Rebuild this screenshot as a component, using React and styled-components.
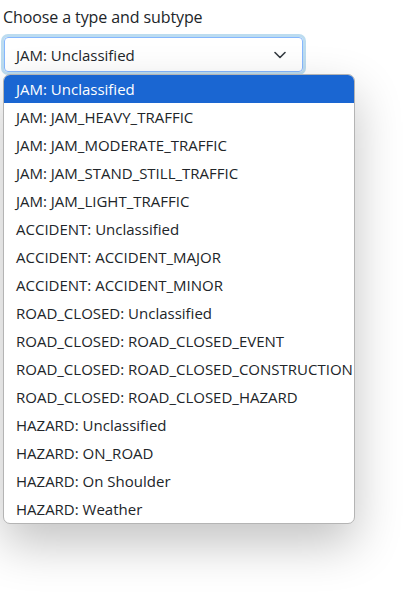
import React from "react";
import styled, { createGlobalStyle } from "styled-components";

const GlobalStyle = createGlobalStyle`
  body {
    margin: 0;
    background: #ffffff;
    font-family: "Open Sans", "Noto Sans", sans-serif;
    color: #212529;
  }
`

const Page = styled.div`
  padding: 3px 0 0 3px;
  width: 418px;
  height: 615px;
  box-sizing: border-box;
`
const Label = styled.div`
  font-size: 16px;
  line-height: 28px;
  margin-bottom: 6px;
  letter-spacing: -0.1px;
`
const Field = styled.div`
  position: relative;
  width: 352px;
`
const SelectBox = styled.div`
  box-sizing: border-box;
  width: 299px;
  height: 35px;
  margin-left: 1px;
  border: 1px solid #86b7fe;
  border-radius: 4px;
  box-shadow: 0 0 0 3px #bcdcf0;
  display: flex;
  align-items: center;
  justify-content: space-between;
  padding: 0 16px 0 11px;
  font-size: 15px;
`
const Chevron = styled.svg`
  width: 12px;
  height: 8px;
  color: #343a40;
`
const Listbox = styled.ul`
  list-style: none;
  margin: 2px 0 0 0;
  padding: 0;
  width: 352px;
  box-sizing: border-box;
  background: #fff;
  border: 1px solid #b4b4b4;
  border-radius: 7px;
  overflow: hidden;
  box-shadow: 0 20px 48px rgba(0, 0, 0, 0.24);
`
const Option = styled.li`
  height: 28px;
  line-height: 28px;
  padding-left: 12px;
  font-size: 15px;
  white-space: nowrap;
  background: ${p => (p.$active ? "#1a66d2" : "transparent")};
  color: ${p => (p.$active ? "#ffffff" : "#212529")};
`

const options = [
  "JAM: Unclassified",
  "JAM: JAM_HEAVY_TRAFFIC",
  "JAM: JAM_MODERATE_TRAFFIC",
  "JAM: JAM_STAND_STILL_TRAFFIC",
  "JAM: JAM_LIGHT_TRAFFIC",
  "ACCIDENT: Unclassified",
  "ACCIDENT: ACCIDENT_MAJOR",
  "ACCIDENT: ACCIDENT_MINOR",
  "ROAD_CLOSED: Unclassified",
  "ROAD_CLOSED: ROAD_CLOSED_EVENT",
  "ROAD_CLOSED: ROAD_CLOSED_CONSTRUCTION",
  "ROAD_CLOSED: ROAD_CLOSED_HAZARD",
  "HAZARD: Unclassified",
  "HAZARD: ON_ROAD",
  "HAZARD: On Shoulder",
  "HAZARD: Weather",
]

export default function App() {
  const selected = 0
  return (
    <Page>
      <GlobalStyle />
      <Label>Choose a type and subtype</Label>
      <Field>
        <SelectBox>
          <span>{options[selected]}</span>
          <Chevron viewBox="0 0 12 8" fill="none">
            <path d="M1 1.5l5 5 5-5" stroke="currentColor" strokeWidth="1.6" strokeLinecap="round" strokeLinejoin="round" />
          </Chevron>
        </SelectBox>
        <Listbox>
          {options.map((o, i) => (
            <Option key={o} $active={i === selected}>{o}</Option>
          ))}
        </Listbox>
      </Field>
    </Page>
  )
}
